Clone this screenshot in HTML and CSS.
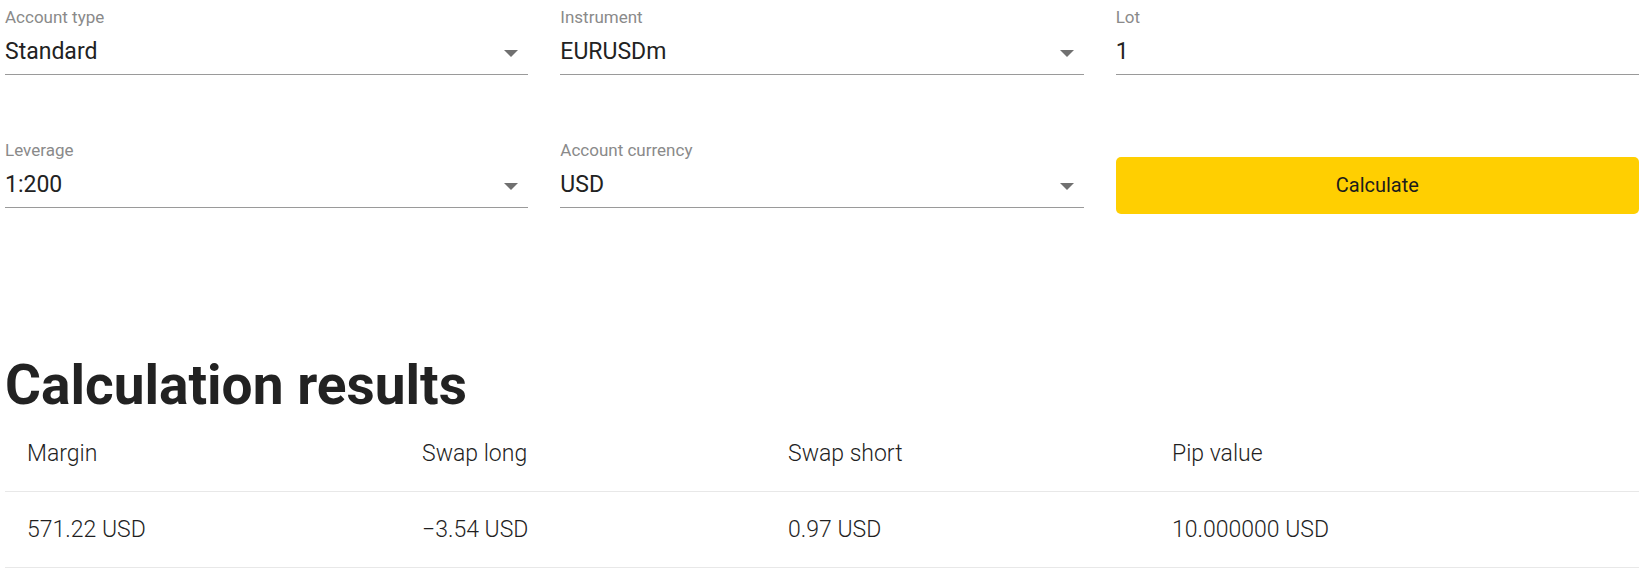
FILE: index.html
```html
<!DOCTYPE html>
<html lang="en">
<head>
<meta charset="utf-8">
<title>Calculator</title>
<link rel="stylesheet" href="styles.css">
</head>
<body>
<div class="page">
  <div class="form-grid">
    <div class="field">
      <div class="field-label">Account type</div>
      <div class="field-value"><span>Standard</span><svg class="caret" width="14" height="7" viewBox="0 0 14 7"><path d="M0 0h14L7 7z"/></svg></div>
    </div>
    <div class="field">
      <div class="field-label">Instrument</div>
      <div class="field-value"><span>EURUSDm</span><svg class="caret" width="14" height="7" viewBox="0 0 14 7"><path d="M0 0h14L7 7z"/></svg></div>
    </div>
    <div class="field">
      <div class="field-label">Lot</div>
      <div class="field-value"><span>1</span></div>
    </div>
    <div class="field">
      <div class="field-label">Leverage</div>
      <div class="field-value"><span>1:200</span><svg class="caret" width="14" height="7" viewBox="0 0 14 7"><path d="M0 0h14L7 7z"/></svg></div>
    </div>
    <div class="field">
      <div class="field-label">Account currency</div>
      <div class="field-value"><span>USD</span><svg class="caret" width="14" height="7" viewBox="0 0 14 7"><path d="M0 0h14L7 7z"/></svg></div>
    </div>
    <button class="calc-btn" type="button">Calculate</button>
  </div>

  <h2 class="results-title">Calculation results</h2>

  <table class="results">
    <colgroup>
      <col class="c1"><col class="c2"><col class="c3"><col class="c4">
    </colgroup>
    <thead>
      <tr><th>Margin</th><th>Swap long</th><th>Swap short</th><th>Pip value</th></tr>
    </thead>
    <tbody>
      <tr><td>571.22 USD</td><td>−3.54 USD</td><td>0.97 USD</td><td>10.000000 USD</td></tr>
    </tbody>
  </table>
</div>
</body>
</html>
```

FILE: styles.css
```css
html, body {
  margin: 0;
  padding: 0;
  background: #ffffff;
}

body {
  font-family: Roboto, "Liberation Sans", Arial, sans-serif;
  color: #222222;
}

.page {
  padding: 7px 8px 0 5px;
}

.form-grid {
  display: grid;
  grid-template-columns: repeat(3, 1fr);
  column-gap: 32px;
  row-gap: 65px;
}

.field {
  display: flex;
  flex-direction: column;
}

.field-label {
  font-size: 17px;
  line-height: 21px;
  color: #8a8a8a;
  margin-bottom: 9px;
}

.field-value {
  display: flex;
  align-items: center;
  justify-content: space-between;
  font-size: 23px;
  line-height: 30px;
  color: #222222;
  padding-bottom: 7px;
  border-bottom: 1px solid #9a9a9a;
}

.caret {
  fill: #707070;
  margin-right: 10px;
  margin-top: 2px;
}

.calc-btn {
  align-self: start;
  margin-top: 17px;
  height: 57px;
  border: none;
  border-radius: 5px;
  background: #ffcf01;
  color: #1c1c1c;
  font-family: Roboto, "Liberation Sans", Arial, sans-serif;
  font-size: 20px;
  padding-bottom: 2px;
  cursor: pointer;
}

.results-title {
  margin: 140px 0 0 0;
  font-size: 55px;
  line-height: 62px;
  font-weight: 700;
  color: #222222;
}

.results {
  width: 100%;
  border-collapse: collapse;
  table-layout: fixed;
}

.results .c1 { width: 395px; }
.results .c2 { width: 366px; }
.results .c3 { width: 384px; }

.results th,
.results td {
  height: 75px;
  padding: 0 0 0 22px;
  text-align: left;
  font-size: 23px;
  font-weight: 300;
  color: #1f1f1f;
  border-bottom: 1px solid #e8e8e8;
  white-space: nowrap;
}
```
